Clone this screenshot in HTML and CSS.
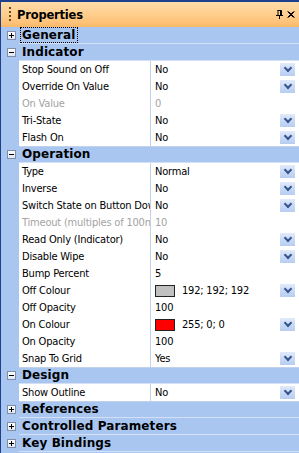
FILE: index.html
```html
<!DOCTYPE html>
<html>
<head>
<meta charset="utf-8">
<link rel="stylesheet" href="styles.css">
</head>
<body>
<div class="panel">
  <div class="title">
    <span class="grip"></span>
    <span class="title-text">Properties</span>
    <span class="title-icons">
      <svg class="pin" width="7" height="9" viewBox="0 0 7 9"><path d="M1.5 0.5h4v5M2 0v5M0 5.5h7M3.5 5.5v3.5" fill="none" stroke="#000" stroke-width="1"/><path d="M4.5 0v5.5" stroke="#000" stroke-width="1"/></svg>
      <svg class="close" width="8" height="7" viewBox="0 0 8 7"><path d="M0.5 0.5l6 6M1.5 0.5l6 6M6.5 0.5l-6 6M7.5 0.5l-6 6" stroke="#000" stroke-width="1" fill="none"/></svg>
    </span>
  </div>
  <div class="grid">
    <div class="cat"><span class="exp plus"></span><span class="cat-label"><span class="focus">General</span></span></div>
    <div class="cat"><span class="exp minus"></span><span class="cat-label">Indicator</span></div>
    <div class="prop"><span class="margin"></span><span class="name">Stop Sound on Off</span><span class="val">No<span class="dd"></span></span></div>
    <div class="prop"><span class="margin"></span><span class="name">Override On Value</span><span class="val">No<span class="dd"></span></span></div>
    <div class="prop dis"><span class="margin"></span><span class="name">On Value</span><span class="val">0</span></div>
    <div class="prop"><span class="margin"></span><span class="name">Tri-State</span><span class="val">No<span class="dd"></span></span></div>
    <div class="prop"><span class="margin"></span><span class="name">Flash On</span><span class="val">No<span class="dd"></span></span></div>
    <div class="cat"><span class="exp minus"></span><span class="cat-label">Operation</span></div>
    <div class="prop"><span class="margin"></span><span class="name">Type</span><span class="val">Normal<span class="dd"></span></span></div>
    <div class="prop"><span class="margin"></span><span class="name">Inverse</span><span class="val">No<span class="dd"></span></span></div>
    <div class="prop"><span class="margin"></span><span class="name">Switch State on Button Down</span><span class="val">No<span class="dd"></span></span></div>
    <div class="prop dis"><span class="margin"></span><span class="name">Timeout (multiples of 100ms)</span><span class="val">10</span></div>
    <div class="prop"><span class="margin"></span><span class="name">Read Only (Indicator)</span><span class="val">No<span class="dd"></span></span></div>
    <div class="prop"><span class="margin"></span><span class="name">Disable Wipe</span><span class="val">No<span class="dd"></span></span></div>
    <div class="prop"><span class="margin"></span><span class="name">Bump Percent</span><span class="val">5</span></div>
    <div class="prop"><span class="margin"></span><span class="name">Off Colour</span><span class="val"><span class="swatch grey"></span>192; 192; 192<span class="dd"></span></span></div>
    <div class="prop"><span class="margin"></span><span class="name">Off Opacity</span><span class="val">100</span></div>
    <div class="prop"><span class="margin"></span><span class="name">On Colour</span><span class="val"><span class="swatch red"></span>255; 0; 0<span class="dd"></span></span></div>
    <div class="prop"><span class="margin"></span><span class="name">On Opacity</span><span class="val">100</span></div>
    <div class="prop"><span class="margin"></span><span class="name">Snap To Grid</span><span class="val">Yes<span class="dd"></span></span></div>
    <div class="cat"><span class="exp minus"></span><span class="cat-label">Design</span></div>
    <div class="prop"><span class="margin"></span><span class="name">Show Outline</span><span class="val">No<span class="dd"></span></span></div>
    <div class="cat"><span class="exp plus"></span><span class="cat-label">References</span></div>
    <div class="cat"><span class="exp plus"></span><span class="cat-label">Controlled Parameters</span></div>
    <div class="cat"><span class="exp plus"></span><span class="cat-label">Key Bindings</span></div>
  </div>
</div>
</body>
</html>
```

FILE: styles.css
```css
html, body {
  margin: 0;
  padding: 0;
  background: #a9c6f1;
}

body {
  font-family: "DejaVu Sans Condensed", "DejaVu Sans", sans-serif;
  font-size: 11px;
  letter-spacing: -0.2px;
  color: #000;
}

.panel {
  width: 299px;
  height: 453px;
  box-sizing: border-box;
  border-top: 2px solid #1d3f8e;
  border-left: 1px solid #1d3f8e;
  background: #a9c6f1;
  overflow: hidden;
}

.title {
  height: 25px;
  display: flex;
  align-items: center;
  background: linear-gradient(to bottom, #ffdcaa 0%, #ffcf8e 45%, #fec37a 80%, #f9b868 100%);
}

.grip {
  width: 2px;
  height: 16px;
  margin-left: 8px;
  background: repeating-linear-gradient(to bottom, #6e4c1e 0 2px, transparent 2px 4px);
}

.title-text {
  margin-left: 6px;
  font-family: "DejaVu Sans", sans-serif;
  font-weight: bold;
  font-size: 11.5px;
  letter-spacing: -0.2px;
}

.title-icons {
  margin-left: auto;
  margin-right: 4px;
  display: flex;
  align-items: center;
  gap: 4px;
}

.pin, .close {
  display: block;
}

.grid {
  display: flex;
  flex-direction: column;
}

.cat {
  display: grid;
  grid-template-columns: 18px 1fr;
  height: 17px;
  box-sizing: border-box;
}

.exp {
  width: 9px;
  height: 9px;
  box-sizing: border-box;
  margin: 4px 0 0 6px;
  border: 1px solid #7f8ea8;
  background: linear-gradient(to bottom, #ffffff, #dfe6f0);
  position: relative;
}

.exp::before {
  content: "";
  position: absolute;
  left: 1px;
  top: 3px;
  width: 5px;
  height: 1px;
  background: #000;
}

.exp.plus::after {
  content: "";
  position: absolute;
  left: 3px;
  top: 1px;
  width: 1px;
  height: 5px;
  background: #000;
}

.cat-label {
  font-family: "DejaVu Sans", sans-serif;
  font-weight: bold;
  font-size: 12px;
  letter-spacing: 0.1px;
  line-height: 16px;
  padding-left: 1px;
  border-bottom: 1px solid #d3e0f5;
  white-space: nowrap;
  overflow: hidden;
}

.focus {
  display: inline-block;
  padding: 0 1px;
  line-height: 14px;
  border: 1px dotted #000;
}

.cat-label:not(:has(.focus)) {
  padding-left: 3px;
}

.prop {
  display: grid;
  grid-template-columns: 18px 132px 1fr;
  height: 17px;
}

.name {
  background: #fff;
  border-right: 1px solid #c2d1ea;
  border-bottom: 1px solid #c2d1ea;
  padding-left: 3px;
  line-height: 17px;
  white-space: nowrap;
  overflow: hidden;
}

.val {
  background: #fff;
  border-bottom: 1px solid #c2d1ea;
  padding-left: 4px;
  line-height: 17px;
  white-space: nowrap;
  display: flex;
  align-items: center;
}

.dis .name, .dis .val {
  color: #a3a3a3;
}

.dd {
  margin-left: auto;
  margin-right: 4px;
  width: 15px;
  height: 13px;
  background: linear-gradient(to bottom, #e2ebfb 0%, #c9daf6 50%, #b7cdf1 100%);
  position: relative;
}

.dd::after {
  content: "";
  position: absolute;
  left: 5px;
  top: 2px;
  width: 4px;
  height: 4px;
  border-right: 2px solid #36558f;
  border-bottom: 2px solid #36558f;
  transform: rotate(45deg);
}

.swatch {
  width: 20px;
  height: 12px;
  box-sizing: border-box;
  border: 1px solid #222;
  margin-right: 7px;
}

.swatch.grey {
  background: #c0c0c0;
}

.swatch.red {
  background: #ff0000;
}
```
